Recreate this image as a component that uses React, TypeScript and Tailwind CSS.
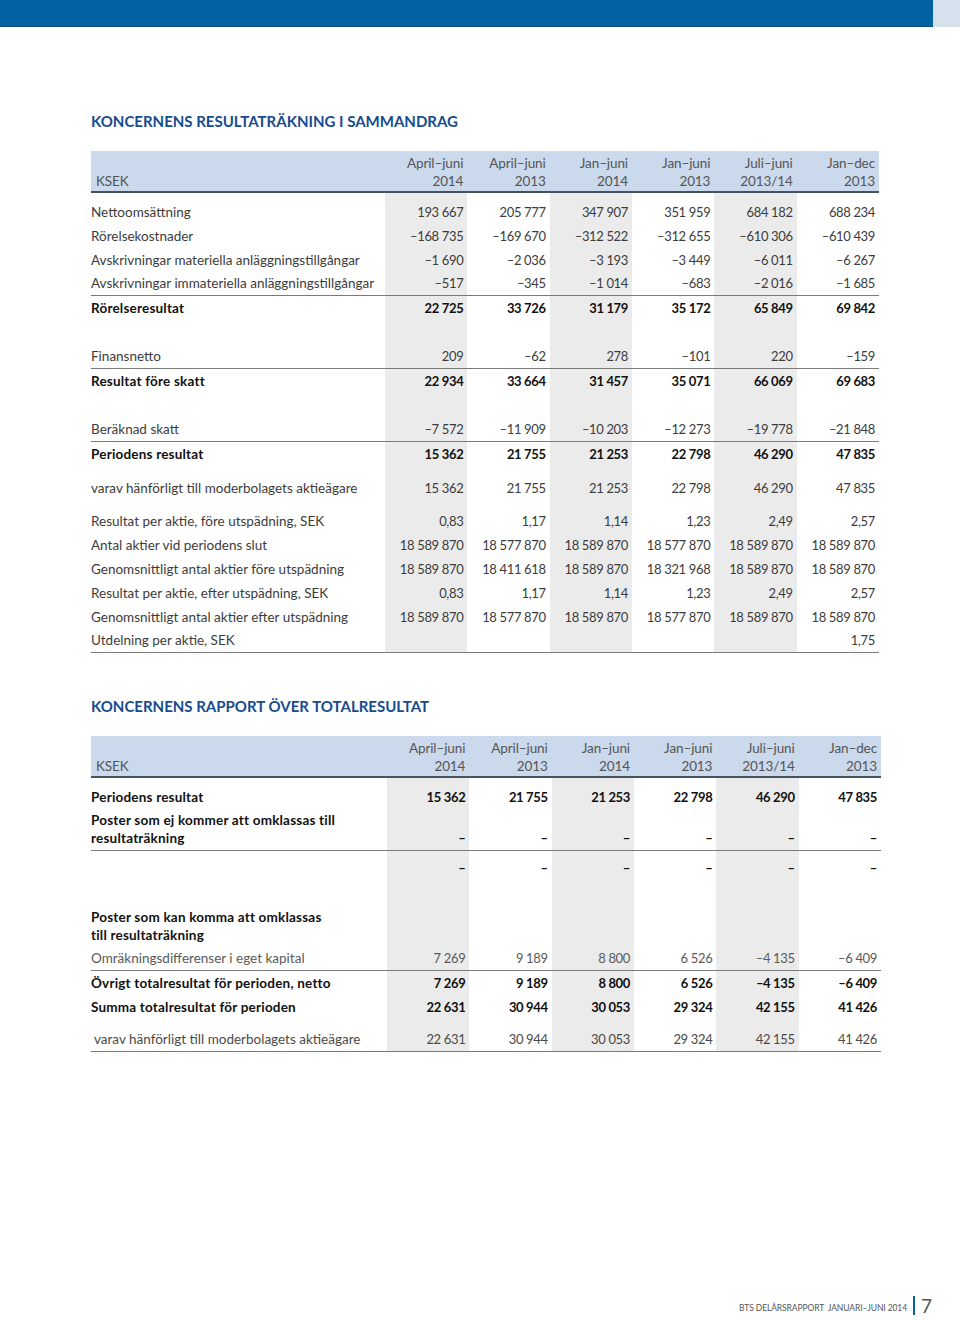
import React from 'react';

type Row =
  | { kind: 'spacer'; h: string }
  | {
      kind: 'row';
      label: React.ReactNode;
      v: string[];
      bold?: boolean;
      border?: boolean;
      h?: string;
      tone?: string;
      indent?: boolean;
    };

const periods = [
  ['April–juni', '2014'],
  ['April–juni', '2013'],
  ['Jan–juni', '2014'],
  ['Jan–juni', '2013'],
  ['Juli–juni', '2013/14'],
  ['Jan–dec', '2013'],
];

const shade = (i: number) => (i % 2 === 0 ? 'bg-[#ebebeb]' : '');

const sp = (h: string): Row => ({ kind: 'spacer', h });

const incomeRows: Row[] = [
  sp('h-[7px]'),
  { kind: 'row', label: 'Nettoomsättning', v: ['193 667', '205 777', '347 907', '351 959', '684 182', '688 234'] },
  { kind: 'row', label: 'Rörelsekostnader', v: ['–168 735', '–169 670', '–312 522', '–312 655', '–610 306', '–610 439'] },
  { kind: 'row', label: 'Avskrivningar materiella anläggningstillgångar', v: ['–1 690', '–2 036', '–3 193', '–3 449', '–6 011', '–6 267'] },
  { kind: 'row', label: 'Avskrivningar immateriella anläggningstillgångar', v: ['–517', '–345', '–1 014', '–683', '–2 016', '–1 685'], border: true },
  { kind: 'row', label: 'Rörelseresultat', bold: true, v: ['22 725', '33 726', '31 179', '35 172', '65 849', '69 842'] },
  sp('h-[25px]'),
  { kind: 'row', label: 'Finansnetto', v: ['209', '–62', '278', '–101', '220', '–159'], border: true },
  { kind: 'row', label: 'Resultat före skatt', bold: true, v: ['22 934', '33 664', '31 457', '35 071', '66 069', '69 683'] },
  sp('h-[25px]'),
  { kind: 'row', label: 'Beräknad skatt', v: ['–7 572', '–11 909', '–10 203', '–12 273', '–19 778', '–21 848'], border: true },
  { kind: 'row', label: 'Periodens resultat', bold: true, v: ['15 362', '21 755', '21 253', '22 798', '46 290', '47 835'] },
  sp('h-[10px]'),
  { kind: 'row', label: 'varav hänförligt till moderbolagets aktieägare', v: ['15 362', '21 755', '21 253', '22 798', '46 290', '47 835'] },
  sp('h-[9px]'),
  { kind: 'row', label: 'Resultat per aktie, före utspädning, SEK', v: ['0,83', '1,17', '1,14', '1,23', '2,49', '2,57'] },
  { kind: 'row', label: 'Antal aktier vid periodens slut', v: ['18 589 870', '18 577 870', '18 589 870', '18 577 870', '18 589 870', '18 589 870'] },
  { kind: 'row', label: 'Genomsnittligt antal aktier före utspädning', v: ['18 589 870', '18 411 618', '18 589 870', '18 321 968', '18 589 870', '18 589 870'] },
  { kind: 'row', label: 'Resultat per aktie, efter utspädning, SEK', v: ['0,83', '1,17', '1,14', '1,23', '2,49', '2,57'] },
  { kind: 'row', label: 'Genomsnittligt antal aktier efter utspädning', v: ['18 589 870', '18 577 870', '18 589 870', '18 577 870', '18 589 870', '18 589 870'] },
  { kind: 'row', label: 'Utdelning per aktie, SEK', v: ['', '', '', '', '', '1,75'], border: true },
];

const dashes = ['–', '–', '–', '–', '–', '–'];

const totalRows: Row[] = [
  sp('h-[7px]'),
  { kind: 'row', label: 'Periodens resultat', bold: true, v: ['15 362', '21 755', '21 253', '22 798', '46 290', '47 835'] },
  {
    kind: 'row',
    label: (
      <>
        Poster som ej kommer att omklassas till
        <br />
        resultaträkning
      </>
    ),
    bold: true,
    v: dashes,
    border: true,
    h: 'h-[42px]',
  },
  sp('h-[5px]'),
  { kind: 'row', label: '', bold: true, v: dashes },
  sp('h-[26px]'),
  {
    kind: 'row',
    label: (
      <>
        Poster som kan komma att omklassas
        <br />
        till resultaträkning
      </>
    ),
    bold: true,
    v: ['', '', '', '', '', ''],
    h: 'h-[41px]',
  },
  { kind: 'row', label: 'Omräkningsdifferenser i eget kapital', tone: 'text-[#5a5a5a]', v: ['7 269', '9 189', '8 800', '6 526', '–4 135', '–6 409'], border: true },
  { kind: 'row', label: 'Övrigt totalresultat för perioden, netto', bold: true, v: ['7 269', '9 189', '8 800', '6 526', '–4 135', '–6 409'] },
  { kind: 'row', label: 'Summa totalresultat för perioden', bold: true, v: ['22 631', '30 944', '30 053', '29 324', '42 155', '41 426'] },
  sp('h-[9px]'),
  { kind: 'row', label: 'varav hänförligt till moderbolagets aktieägare', indent: true, tone: 'text-[#4a4a4a]', v: ['22 631', '30 944', '30 053', '29 324', '42 155', '41 426'], border: true },
];

function FinTable({ rows, cols, width }: { rows: Row[]; cols: string; width: string }) {
  return (
    <div className={`${width} text-[13px] tracking-[-0.35px]`}>
      {/* header band */}
      <div className={`grid ${cols} h-[42px] bg-[#cad9ec] border-b-2 border-[#46525e] text-[#555] text-[13.5px] tracking-[-0.1px] leading-[18px]`}>
        <div className="flex items-end pl-[5px] pb-[1px]">KSEK</div>
        {periods.map(([a, b], i) => (
          <div key={i} className="flex flex-col items-end justify-end pr-[4px] pb-[1px]">
            <span>{a}</span>
            <span>{b}</span>
          </div>
        ))}
      </div>

      {rows.map((r, ri) => {
        if (r.kind === 'spacer') {
          return (
            <div key={ri} className={`grid ${cols} ${r.h}`}>
              <div />
              {[0, 1, 2, 3, 4, 5].map((i) => (
                <div key={i} className={shade(i)} />
              ))}
            </div>
          );
        }
        const text = r.bold ? 'font-bold text-[#111]' : r.tone ?? 'text-[#3c3c3c]';
        const labelType = r.bold ? 'text-[13.5px] tracking-[0.2px]' : 'text-[13.5px] tracking-[0px]';
        return (
          <div
            key={ri}
            className={`grid ${cols} ${r.h ?? 'h-[24px]'} box-border leading-[18px] ${text} ${
              r.border ? 'border-b border-[#7a7a7a]' : ''
            }`}
          >
            <div className={`flex flex-col justify-end pb-[3px] whitespace-nowrap ${labelType} ${r.indent ? 'pl-[3px]' : ''}`}>
              <span>{r.label}</span>
            </div>
            {r.v.map((v, i) => (
              <div key={i} className={`flex items-end justify-end pr-[4px] pb-[3px] ${shade(i)}`}>
                {v}
              </div>
            ))}
          </div>
        );
      })}
    </div>
  );
}

export default function App() {
  return (
    <div
      className="w-[960px] h-[1320px] bg-white flex flex-col"
      style={{ fontFamily: 'Lato, "Open Sans", sans-serif' }}
    >
      {/* top band */}
      <div className="flex h-[27px]">
        <div className="flex-1 bg-[#0062a1] border-b border-[#0a4a78]" />
        <div className="w-[27px] bg-[#d7e1ee]" />
      </div>

      <div className="pl-[91px]">
        <h2 className="mt-[84px] mb-[20px] h-[20px] leading-[20px] text-[15px] font-bold tracking-[0px] text-[#174b8d]">
          KONCERNENS RESULTATRÄKNING I SAMMANDRAG
        </h2>
        <FinTable rows={incomeRows} cols="grid-cols-[294px_repeat(6,minmax(0,1fr))]" width="w-[788px]" />

        <h2 className="mt-[43px] mb-[20px] h-[20px] leading-[20px] text-[15px] font-bold tracking-[0px] text-[#174b8d]">
          KONCERNENS RAPPORT ÖVER TOTALRESULTAT
        </h2>
        <FinTable rows={totalRows} cols="grid-cols-[296px_repeat(6,minmax(0,1fr))]" width="w-[790px]" />
      </div>

      {/* footer */}
      <div className="mt-auto mb-[3px] flex items-center justify-end pr-[28px] h-[24px]">
        <span className="text-[8.5px] tracking-[-0.1px] text-[#555] pt-[6px]">BTS DELÅRSRAPPORT&nbsp; JANUARI–JUNI 2014</span>
        <span className="mx-[6px] w-[2px] h-[19px] bg-[#0062a1]" />
        <span className="text-[19px] leading-[19px] text-[#555]">7</span>
      </div>
    </div>
  );
}
